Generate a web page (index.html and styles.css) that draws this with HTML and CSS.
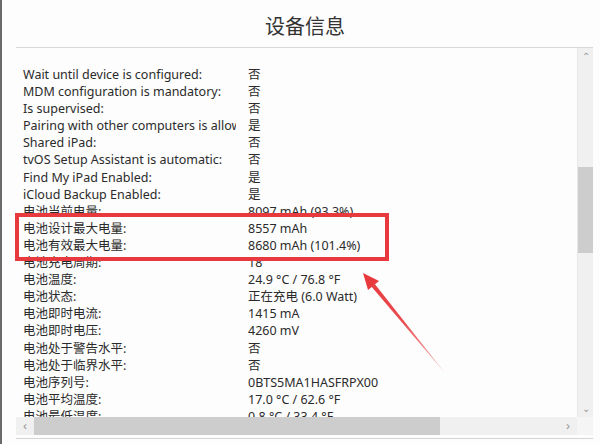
FILE: index.html
```html
<!DOCTYPE html>
<html lang="zh-CN">
<head>
    <meta charset="UTF-8">
    <meta name="viewport" content="width=device-width, initial-scale=1.0">
    <title>设备信息</title>
    <link rel="stylesheet" href="styles.css">
</head>
<body>
    <div class="window">
        <h1 class="title">设备信息</h1>

        <div class="panel">
            <div class="list">
                <div class="row"><span class="label">Wait until device is configured:</span><span class="value">否</span></div>
                <div class="row"><span class="label">MDM configuration is mandatory:</span><span class="value">否</span></div>
                <div class="row"><span class="label">Is supervised:</span><span class="value">否</span></div>
                <div class="row"><span class="label">Pairing with other computers is allowed:</span><span class="value">是</span></div>
                <div class="row"><span class="label">Shared iPad:</span><span class="value">否</span></div>
                <div class="row"><span class="label">tvOS Setup Assistant is automatic:</span><span class="value">否</span></div>
                <div class="row"><span class="label">Find My iPad Enabled:</span><span class="value">是</span></div>
                <div class="row"><span class="label">iCloud Backup Enabled:</span><span class="value">是</span></div>
                <div class="row"><span class="label">电池当前电量:</span><span class="value">8097 mAh (93.3%)</span></div>
                <div class="row"><span class="label">电池设计最大电量:</span><span class="value">8557 mAh</span></div>
                <div class="row"><span class="label">电池有效最大电量:</span><span class="value">8680 mAh (101.4%)</span></div>
                <div class="row"><span class="label">电池充电周期:</span><span class="value">18</span></div>
                <div class="row"><span class="label">电池温度:</span><span class="value">24.9 °C / 76.8 °F</span></div>
                <div class="row"><span class="label">电池状态:</span><span class="value">正在充电 (6.0 Watt)</span></div>
                <div class="row"><span class="label">电池即时电流:</span><span class="value">1415 mA</span></div>
                <div class="row"><span class="label">电池即时电压:</span><span class="value">4260 mV</span></div>
                <div class="row"><span class="label">电池处于警告水平:</span><span class="value">否</span></div>
                <div class="row"><span class="label">电池处于临界水平:</span><span class="value">否</span></div>
                <div class="row"><span class="label">电池序列号:</span><span class="value">0BTS5MA1HASFRPX00</span></div>
                <div class="row"><span class="label">电池平均温度:</span><span class="value">17.0 °C / 62.6 °F</span></div>
                <div class="row"><span class="label">电池最低温度:</span><span class="value">0.8 °C / 33.4 °F</span></div>
            </div>

            <!-- vertical scrollbar -->
            <div class="vscroll">
                <span class="arrow">&#8963;</span>
                <div class="vtrack"><div class="vthumb"></div></div>
                <span class="arrow">&#8964;</span>
            </div>

            <!-- horizontal scrollbar -->
            <div class="hscroll">
                <span class="arrow">&#8249;</span>
                <div class="htrack"><div class="hthumb"></div></div>
                <span class="arrow">&#8250;</span>
            </div>
            <div class="corner"></div>
        </div>

        <!-- annotation -->
        <div class="highlight"></div>
        <svg class="pointer" width="600" height="444" viewBox="0 0 600 444">
            <defs>
                <linearGradient id="fade" x1="445" y1="373" x2="363" y2="273" gradientUnits="userSpaceOnUse">
                    <stop offset="0" stop-color="#e8393e" stop-opacity="0.35"/>
                    <stop offset="0.5" stop-color="#e8393e" stop-opacity="0.9"/>
                    <stop offset="1" stop-color="#e8393e"/>
                </linearGradient>
            </defs>
            <polygon points="445,373 374.8,284.1 371.6,286.7" fill="url(#fade)"/>
            <polygon points="363,273 379,281 368,290" fill="#e8393e"/>
        </svg>
    </div>
</body>
</html>
```

FILE: styles.css
```css
* {
    box-sizing: border-box;
}
body {
    margin: 0;
    padding: 0;
    width: 600px;
    height: 444px;
    overflow: hidden;
    background-color: #fdfdfd;
    font-family: "Noto Sans", "Noto Sans CJK SC", sans-serif;
    color: #2b2b2b;
}
.window {
    position: relative;
    height: 444px;
    border-left: 2px solid #6a6a6a;
    padding-left: 14px;
}
.title {
    margin: 0;
    height: 47px;
    padding-top: 13px;
    padding-right: 6px;
    text-align: center;
    font-family: "Noto Sans CJK SC", sans-serif;
    font-weight: normal;
    font-size: 20px;
    line-height: 26px;
    color: #333;
}
.panel {
    display: grid;
    grid-template-columns: 561px 16px;
    grid-template-rows: 369px 18px;
    width: 577px;
    border-top: 1px solid #d8d8d8;
    border-bottom: 1px solid #d4d4d4;
    padding-bottom: 3px;
}
.list {
    overflow: hidden;
    padding: 18px 0 0 7px;
    font-size: 12.5px;
    line-height: 17.1px;
}
.row {
    display: flex;
    white-space: nowrap;
}
.label {
    width: 213px;
    margin-right: 12px;
    overflow: hidden;
}
.vscroll {
    display: flex;
    flex-direction: column;
    background-color: #f0f0f0;
    border-left: 1px solid #e8e8e8;
}
.vscroll .arrow {
    height: 17px;
    text-align: center;
    font-size: 10px;
    line-height: 17px;
    color: #9a9a9a;
}
.vtrack {
    flex: 1;
    padding-top: 102px;
}
.vthumb {
    height: 86px;
    background-color: #cdcdcd;
}
.hscroll {
    display: flex;
    align-items: stretch;
    background-color: #f0f0f0;
}
.hscroll .arrow {
    width: 18px;
    text-align: center;
    font-size: 13px;
    line-height: 17px;
    color: #9a9a9a;
}
.htrack {
    flex: 1;
}
.hthumb {
    width: 406px;
    height: 100%;
    background-color: #cdcdcd;
}
.corner {
    background-color: #f5f5f5;
}
.highlight {
    position: absolute;
    left: 13px;
    top: 213px;
    width: 374px;
    height: 48px;
    border: 4px solid #e8393e;
}
.pointer {
    position: absolute;
    left: -2px;
    top: 0;
}
```
